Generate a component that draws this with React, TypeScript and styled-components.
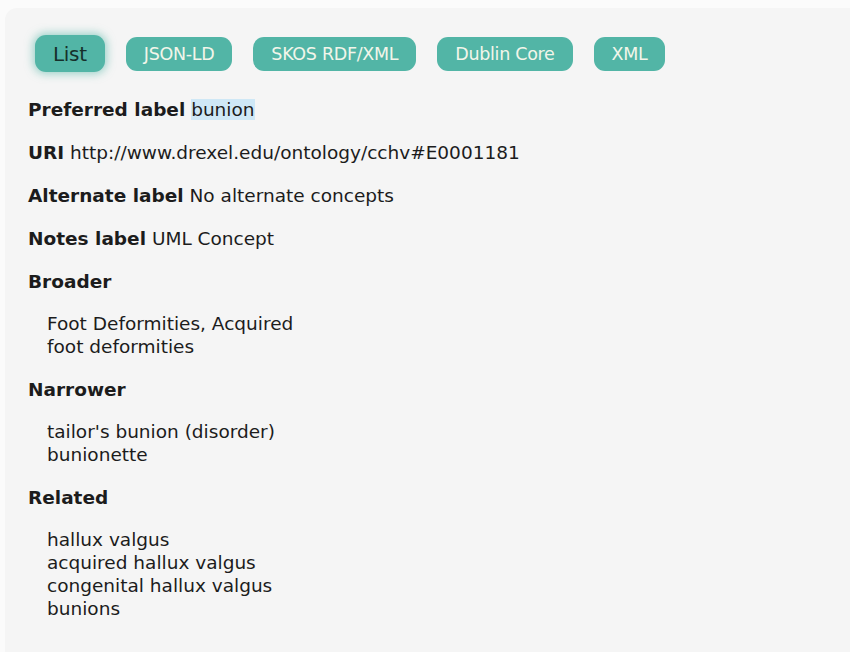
import React from "react";
import styled, { createGlobalStyle } from "styled-components";

const Global = createGlobalStyle`
  html, body { margin: 0; padding: 0; background: #fbfbfb; }
  body { font-family: "DejaVu Sans", Verdana, sans-serif; color: #1c1c1c; }
`;

const Panel = styled.div`
  margin: 8px 0 0 5px;
  min-height: 644px;
  background: #f5f5f5;
  border-top-left-radius: 12px;
  padding: 27px 0 0 23px;
  box-sizing: border-box;
`;

const Toolbar = styled.div`
  display: flex;
  align-items: center;
  gap: 21px;
  padding-left: 7px;
  margin-bottom: 26px;
`;

const FormatButton = styled.button<{ $active?: boolean }>`
  font-family: "DejaVu Sans", Verdana, sans-serif;
  border: none;
  background: #52b5a6;
  border-radius: 11px;
  height: ${(p) => (p.$active ? "37px" : "34px")};
  padding: 0 18px;
  font-size: ${(p) => (p.$active ? "20px" : "17.5px")};
  color: ${(p) => (p.$active ? "#16302b" : "#f2f5ea")};
  box-shadow: ${(p) => (p.$active ? "0 0 8px 2px rgba(82,181,166,0.55)" : "none")};
  letter-spacing: -0.3px;
`;

const Field = styled.p`
  margin: 0 0 20px;
  font-size: 18.5px;
  line-height: 23px;
`;

const Label = styled.b`
  font-weight: bold;
`;

const Highlight = styled.span`
  background: #cfe8f6;
`;

const Heading = styled.h4`
  margin: 0 0 19px;
  font-size: 18.5px;
  line-height: 23px;
  font-weight: bold;
`;

const TermList = styled.ul`
  list-style: none;
  margin: 0 0 20px;
  padding-left: 19px;
  font-size: 18.5px;
  line-height: 23px;
`;

const Term = styled.li``;

const sections: { title: string; items: string[] }[] = [
  { title: "Broader", items: ["Foot Deformities, Acquired", "foot deformities"] },
  { title: "Narrower", items: ["tailor's bunion (disorder)", "bunionette"] },
  {
    title: "Related",
    items: ["hallux valgus", "acquired hallux valgus", "congenital hallux valgus", "bunions"],
  },
];

export default function App() {
  return (
    <>
      <Global />
      <Panel>
        <Toolbar>
          <FormatButton $active>List</FormatButton>
          <FormatButton>JSON-LD</FormatButton>
          <FormatButton>SKOS RDF/XML</FormatButton>
          <FormatButton>Dublin Core</FormatButton>
          <FormatButton>XML</FormatButton>
        </Toolbar>
        <Field>
          <Label>Preferred label</Label> <Highlight>bunion</Highlight>
        </Field>
        <Field>
          <Label>URI</Label> http://www.drexel.edu/ontology/cchv#E0001181
        </Field>
        <Field>
          <Label>Alternate label</Label> No alternate concepts
        </Field>
        <Field>
          <Label>Notes label</Label> UML Concept
        </Field>
        {sections.map((s) => (
          <React.Fragment key={s.title}>
            <Heading>{s.title}</Heading>
            <TermList>
              {s.items.map((i) => (
                <Term key={i}>{i}</Term>
              ))}
            </TermList>
          </React.Fragment>
        ))}
      </Panel>
    </>
  );
}
